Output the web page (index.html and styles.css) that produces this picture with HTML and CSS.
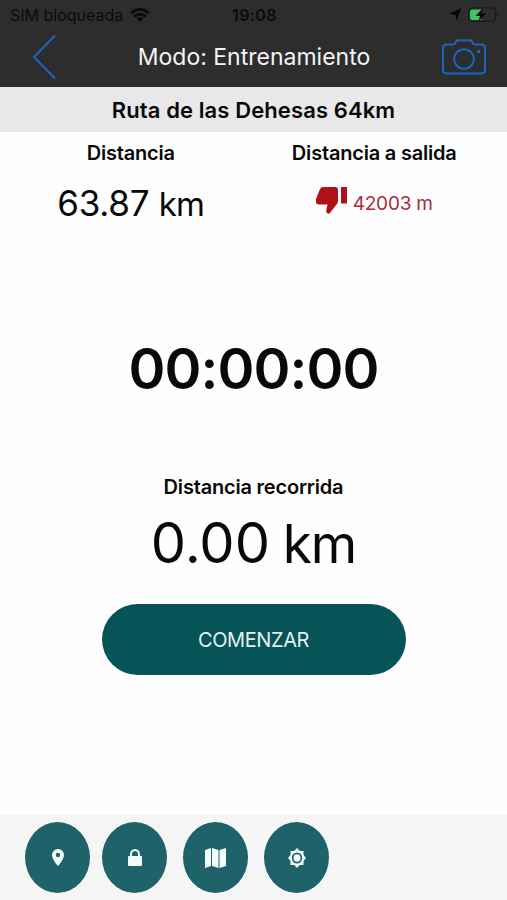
FILE: index.html
```html
<!DOCTYPE html>
<html lang="es">
<head>
  <meta charset="utf-8">
  <title>Modo: Entrenamiento</title>
  <link rel="stylesheet" href="styles.css">
</head>
<body>
  <header class="header">
    <div class="status-bar">
      <div class="carrier">
        <span>SIM bloqueada</span>
        <svg width="20" height="14" viewBox="0 0 20 14" fill="none" stroke="#0a0a0a" stroke-width="2.8">
          <path d="M1 5.2Q10 -2.4 19 5.2"/>
          <path d="M4.2 8.6Q10 3.8 15.8 8.6"/>
          <path d="M10 14L6.6 10.6Q10 8 13.4 10.6Z" fill="#0a0a0a" stroke="none"/>
        </svg>
      </div>
      <span class="clock">19:08</span>
      <div class="indicators">
        <svg width="12" height="13" viewBox="0 0 12 13"><path d="M12 0L7.5 13L6.5 6.8L0 6Z" fill="#050505"/></svg>
        <svg width="31" height="16" viewBox="0 0 31 16">
          <rect x="0.7" y="1" width="27" height="13.5" rx="4" fill="none" stroke="#171717" stroke-width="1.2"/>
          <path d="M29.5 5.5q1.5 2.2 0 4.5z" fill="#171717"/>
          <path d="M4.5 2.5H13V13H4.500Q2 13 2 10.500V5Q2 2.500 4.500 2.500Z" fill="#3fc564"/>
          <path d="M14.500 1.500L7.500 9H12L10.500 14L18.500 6.500H13.500Z" fill="#0a0a0a"/>
        </svg>
      </div>
    </div>
    <div class="nav-bar">
      <svg class="back" width="26" height="46" viewBox="0 0 26 46" fill="none" stroke="#1967bd" stroke-width="2"><path d="M23 1.500L2 23L23 44.500"/></svg>
      <h1 class="nav-title">Modo: Entrenamiento</h1>
      <svg class="camera" width="44" height="36" viewBox="0 0 44 36" fill="none" stroke="#1b67c0" stroke-width="2">
        <path d="M5 5.500H10Q13 5.500 13.500 3.500Q14 1.200 16 1.200H28Q30 1.200 30.500 3.500Q31 5.500 34 5.500H39Q43 5.500 43 9.500V30.500Q43 34.500 39 34.500H5Q1 34.500 1 30.500V9.500Q1 5.500 5 5.500Z"/>
        <circle cx="22" cy="20" r="9.800"/>
        <rect x="35" y="11" width="3" height="3" fill="#1b67c0" stroke="none"/>
      </svg>
    </div>
  </header>

  <h2 class="route-name">Ruta de las Dehesas 64km</h2>

  <main class="content">
    <div class="stats">
      <div class="stat">
        <h3 class="label">Distancia</h3>
        <div class="total">63.87 <span class="unit">km</span></div>
      </div>
      <div class="stat">
        <h3 class="label">Distancia a salida</h3>
        <div class="to-start">
          <svg width="31" height="27" viewBox="0 0 31 27" fill="#b01017">
            <path d="M7 0H19Q22 0 22 3V14Q22 16 20.500 17.500L14 26Q12.500 27.500 11 26Q10 24.500 10.300 23L11.500 17.500H3Q0 17.500 0 14.500V12L4 2Q5 0 7 0Z"/>
            <path d="M25 0H31V16.500H25Z"/>
          </svg>
          <span>42003 m</span>
        </div>
      </div>
    </div>

    <div class="timer">00:00:00</div>

    <h3 class="label label-done">Distancia recorrida</h3>
    <div class="distance">0.00 <span class="unit">km</span></div>
    <button class="start-button">COMENZAR</button>
  </main>

  <footer class="toolbar">
    <button class="round-button" aria-label="Posición">
      <svg width="12" height="17" viewBox="0 0 12 17"><path fill-rule="evenodd" d="M6 0A6 6 0 0 0 0 6C0 10.500 6 17 6 17S12 10.500 12 6A6 6 0 0 0 6 0ZM6 3.800A2.200 2.200 0 1 1 6 8.200A2.200 2.200 0 1 1 6 3.800Z"/></svg>
    </button>
    <button class="round-button" aria-label="Bloquear">
      <svg width="14" height="17" viewBox="0 0 14 17"><path fill-rule="evenodd" d="M2 7V5.500A5 5.500 0 0 1 12 5.500V7H13Q14 7 14 8V16Q14 17 13 17H1Q0 17 0 16V8Q0 7 1 7ZM4 7H10V5.500A3 3.500 0 0 0 4 5.500Z"/></svg>
    </button>
    <button class="round-button" aria-label="Mapa">
      <svg width="21" height="20" viewBox="0 0 21 20"><path d="M0 2L6 0V18L0 20ZM7 0L13.500 2V20L7 18ZM14.500 2L21 0V18L14.500 20Z"/></svg>
    </button>
    <button class="round-button" aria-label="Ajustes">
      <svg width="18" height="20" viewBox="0 0 18 20"><path fill-rule="evenodd" d="M9 0L11.800 3H15.500V7L18 10L15.500 13V17H11.800L9 20L6.200 17H2.500V13L0 10L2.500 7V3H6.200ZM9 4.500A5.200 5.500 0 1 0 9 15.500A5.200 5.500 0 1 0 9 4.500Z"/><ellipse cx="9" cy="10" rx="3.500" ry="3.800"/></svg>
    </button>
  </footer>
</body>
</html>
```
FILE: styles.css
```css
* {
  box-sizing: border-box;
}

body {
  display: flex;
  flex-direction: column;
  height: 900px;
  margin: 0;
  font-family: Inter, "Liberation Sans", sans-serif;
  color: #090909;
  background-color: #fefefe;
}

h1, h2, h3 {
  margin: 0;
}

svg {
  display: block;
  flex: none;
}

.header {
  height: 87px;
  background-color: #2d2d2d;
}

.status-bar {
  display: grid;
  grid-template-columns: 1fr auto 1fr;
  align-items: center;
  height: 29px;
  padding: 0 8px 0 10px;
  color: #0b0b0b;
  font-size: 16px;
}

.carrier {
  display: flex;
  align-items: center;
  gap: 7px;
}

.clock {
  font-weight: 600;
  letter-spacing: 0.4px;
}

.indicators {
  display: flex;
  align-items: center;
  justify-content: flex-end;
  gap: 7px;
}

.nav-bar {
  display: flex;
  align-items: center;
  justify-content: space-between;
  height: 56px;
  padding: 0 21px 0 32px;
}

.nav-title {
  padding-left: 8px;
  color: #f4f4f4;
  font-size: 23px;
  font-weight: 400;
}

.route-name {
  height: 45px;
  line-height: 47px;
  text-align: center;
  font-size: 22px;
  font-weight: 600;
  letter-spacing: 0.1px;
  background-color: #e8e8e8;
}

.content {
  display: flex;
  flex-direction: column;
  align-items: center;
  flex: 1;
}

.stats {
  display: flex;
  width: 100%;
  padding: 9px 11px 0 9px;
}

.stat {
  display: flex;
  flex-direction: column;
  align-items: center;
  flex: 1;
}

.label {
  line-height: 24px;
  font-size: 20px;
  font-weight: 600;
  letter-spacing: -0.2px;
}

.total {
  margin-top: 16px;
  line-height: 44px;
  font-size: 35px;
  letter-spacing: -0.3px;
}

.total .unit {
  font-size: 33px;
  letter-spacing: -0.8px;
}

.to-start {
  display: flex;
  gap: 6px;
  margin-top: 22px;
  line-height: 33px;
  font-size: 19px;
  letter-spacing: -0.2px;
  color: #ac2b39;
}

.timer {
  margin-top: 109px;
  line-height: 68px;
  font-size: 56px;
  font-weight: 600;
  letter-spacing: -0.9px;
}

.label-done {
  margin-top: 72px;
}

.distance {
  margin-top: 10px;
  line-height: 68px;
  font-size: 56px;
  word-spacing: -3px;
}

.distance .unit {
  font-size: 53px;
  letter-spacing: -1px;
}

.start-button {
  width: 304px;
  height: 71px;
  margin-top: 26px;
  border: none;
  border-radius: 36px;
  background-color: #065358;
  color: #e4f1f1;
  font-family: inherit;
  font-size: 20px;
  letter-spacing: -0.4px;
}

.toolbar {
  display: flex;
  gap: 16px;
  height: 85px;
  padding: 7px 25px;
  background-color: #f5f5f5;
}

.round-button {
  display: flex;
  align-items: center;
  justify-content: center;
  width: 65px;
  height: 71px;
  padding: 0;
  border: none;
  border-radius: 50%;
  background-color: #1e636a;
  fill: #f3fbfb;
}

.round-button:first-child {
  margin-right: -4px;
}
```
